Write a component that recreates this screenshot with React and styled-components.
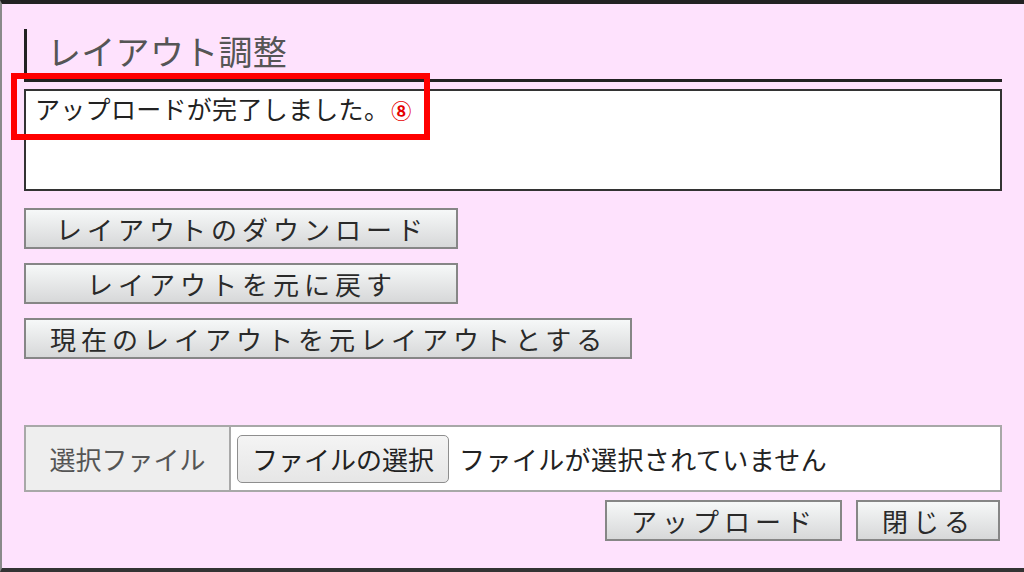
import React from 'react';
import styled, { createGlobalStyle } from 'styled-components';

const GlobalStyle = createGlobalStyle`
  html, body {
    margin: 0;
    padding: 0;
    background: #fee2fd;
  }
  body {
    font-family: 'Noto Sans CJK JP', 'Noto Sans', sans-serif;
  }
`;

const Panel = styled.div`
  position: relative;
  box-sizing: border-box;
  height: 572px;
  background: #fee2fd;
  border-top: 4px solid #222;
  border-bottom: 4px solid #333;
  border-left: 2px solid #8a8a8a;
  padding: 25px 22px 0 22px;
  display: flex;
  flex-direction: column;
  align-items: flex-start;
`;

const Title = styled.h2`
  box-sizing: border-box;
  align-self: stretch;
  margin: 0;
  height: 53px;
  border-left: 3px solid #222;
  border-bottom: 3px solid #222;
  padding: 0 0 0 20px;
  font-size: 34px;
  letter-spacing: 0.3px;
  font-weight: normal;
  line-height: 44px;
  color: #555;
`;

const Message = styled.div`
  box-sizing: border-box;
  align-self: stretch;
  margin-top: 7px;
  height: 102px;
  background: #fff;
  border: 2px solid #333;
  padding: 0 9px;
  font-size: 25px;
  letter-spacing: 0.3px;
  line-height: 34px;
  color: #222;
`;

const Mark = styled.span`
  color: #e60000;
  font-size: 20px;
  font-weight: bold;
  margin-left: 2px;
`;

const Highlight = styled.div`
  position: absolute;
  left: 9px;
  top: 69px;
  width: 419px;
  height: 67px;
  box-sizing: border-box;
  border: 6px solid #ff0000;
  pointer-events: none;
`;

const ButtonStack = styled.div`
  display: flex;
  flex-direction: column;
  align-items: flex-start;
  gap: 14px;
  margin-top: 17px;
`;

const Button = styled.button`
  box-sizing: border-box;
  min-width: ${(p) => p.$minWidth || 0}px;
  height: 41px;
  padding: 0 ${(p) => (p.$minWidth ? 20 : 23)}px 0 ${(p) => (p.$minWidth ? 22 : 24)}px;
  font-family: 'Noto Sans CJK JP', sans-serif;
  font-size: 26px;
  line-height: 1;
  letter-spacing: 5px;
  color: #2a2a2a;
  background: linear-gradient(#f6f8f8, #d7d8d9);
  border: 2px solid #868686;
  border-radius: 0;
  cursor: pointer;
  white-space: nowrap;
`;

const FileRow = styled.div`
  box-sizing: border-box;
  align-self: stretch;
  margin-top: 66px;
  height: 67px;
  display: flex;
  border: 2px solid #a8a8a8;
  background: #fff;
`;

const FileLabel = styled.div`
  box-sizing: border-box;
  width: 205px;
  display: flex;
  align-items: center;
  justify-content: center;
  background: #eeeeee;
  border-right: 2px solid #a8a8a8;
  font-size: 26px;
  color: #555;
`;

const FileCell = styled.div`
  flex: 1;
  display: flex;
  align-items: center;
  padding-left: 6px;
  gap: 10px;
  font-size: 26px;
  letter-spacing: 0.4px;
  color: #222;
`;

const FileButton = styled.button`
  box-sizing: border-box;
  height: 48px;
  padding: 0 14px;
  font-family: 'Noto Sans CJK JP', sans-serif;
  font-size: 26px;
  color: #222;
  background: linear-gradient(#f4f4f4, #e6e6e6);
  border: 1px solid #8e8e8e;
  border-radius: 5px;
`;

const Actions = styled.div`
  align-self: stretch;
  display: flex;
  justify-content: flex-end;
  gap: 14px;
  margin-top: 8px;
  padding-right: 2px;
`;

export default function App() {
  return (
    <>
      <GlobalStyle />
      <Panel>
        <Title>レイアウト調整</Title>
        <Message>
          アップロードが完了しました。<Mark>⑧</Mark>
        </Message>
        <ButtonStack>
          <Button $minWidth={434}>レイアウトのダウンロード</Button>
          <Button $minWidth={434}>レイアウトを元に戻す</Button>
          <Button>現在のレイアウトを元レイアウトとする</Button>
        </ButtonStack>
        <FileRow>
          <FileLabel>選択ファイル</FileLabel>
          <FileCell>
            <FileButton>ファイルの選択</FileButton>
            ファイルが選択されていません
          </FileCell>
        </FileRow>
        <Actions>
          <Button>アップロード</Button>
          <Button>閉じる</Button>
        </Actions>
        <Highlight />
      </Panel>
    </>
  );
}
